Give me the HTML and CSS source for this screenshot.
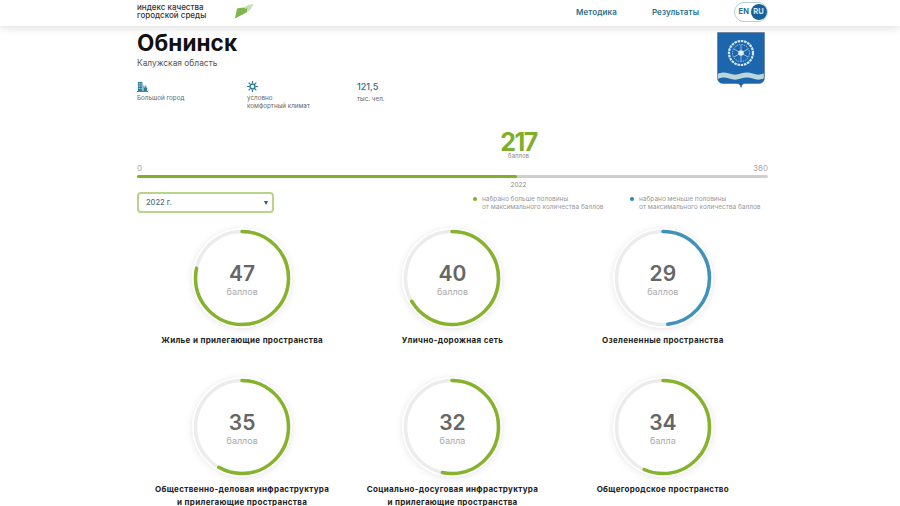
FILE: index.html
```html
<!DOCTYPE html>
<html lang="ru">
<head>
<meta charset="utf-8">
<title>Обнинск</title>
<link rel="stylesheet" href="styles.css">
</head>
<body>
<header class="topbar">
  <div class="brand">
    <div class="brand-text">индекс качества<br>городской среды</div>
    <svg class="leaf" viewBox="0 0 19 15"><path fill="#7fb54a" d="M0 14.500 2 4.500 8 3.500 11 4.500 13 3 12 8 9.500 9.500Z"/><path fill="#c9dfb6" d="M8 3.500 13 1 18.500 0 15 6 12 8 13 3 11 4.500Z"/></svg>
  </div>
  <nav class="nav">
    <a>Методика</a>
    <a>Результаты</a>
    <div class="lang"><span class="lang-en">EN</span><span class="lang-ru">RU</span></div>
  </nav>
</header>

<main class="page">
  <section class="head">
    <div>
      <h1 class="city">Обнинск</h1>
      <div class="region">Калужская область</div>
      <div class="stats">
        <div class="stat">
          <svg class="stat-icon" viewBox="0 0 12 12"><path fill="#2f7f9c" d="M1 1h5v10H1zM7 5h1v2h1V5h1v2h1v4H7z"/><path fill="#fff" d="M2 2.500h1v1H2zM4 2.500h1v1H4zM2 5h1v1H2zM4 5h1v1H4zM2 7.500h1v1H2zM4 7.500h1v1H4z"/><path fill="#2f7f9c" d="M0 11h12v1H0z"/></svg>
          <div class="stat-label">Большой город</div>
        </div>
        <div class="stat">
          <svg class="stat-icon" viewBox="0 0 12 12"><g stroke="#2f7f9c" fill="none"><circle cx="6" cy="6" r="2.700" stroke-width="1.700"/><path stroke-width="1.300" d="M6 0v2.500M6 9.500V12M0 6h2.500M9.500 6H12M1.800 1.800l1.800 1.800M8.400 8.400l1.800 1.800M1.800 10.200l1.800-1.800M8.400 3.600l1.800-1.800"/></g></svg>
          <div class="stat-label">условно<br>комфортный климат</div>
        </div>
        <div class="stat">
          <div class="stat-value">121,5</div>
          <div class="stat-label">тыс. чел.</div>
        </div>
      </div>
    </div>
    <svg class="arms" viewBox="0 0 48 57">
      <path fill="#1c66ad" stroke="#5c6f80" stroke-width=".6" d="M.5.500h47v45c0 4-2.500 6-6 6H28c-2 0-3 1-4 4-1-3-2-4-4-4H6.500c-3.500 0-6-2-6-6z"/>
      <g fill="none" stroke="#d7e8ee">
        <circle cx="24" cy="21" r="12" stroke-width="2.200" stroke-dasharray="2.500 .8"/>
        <circle cx="24" cy="21" r="8.500" stroke-width=".7" stroke-dasharray="1.500 1"/>
        <path stroke-width=".9" stroke="#9fc4dd" d="M24 13v16M17 17l14 8M17 25l14-8"/>
      </g>
      <circle cx="24" cy="21" r="2.800" fill="#dfeef2"/>
      <path fill="#b9d6da" d="M.8 42c4-2 7-2 11.500-.5s7 1.500 11.500 0 8-1.500 12 0 7 1.500 11 0v5c-4 1.500-7 1.500-11 0s-8-1.500-12 0-7 1.500-11.500 0-7.500-1.500-11.500.5z"/>
    </svg>
  </section>

  <section class="score">
    <div class="score-value">217</div>
    <div class="score-unit">баллов</div>
  </section>
  <div class="scale"><span>0</span><span>360</span></div>
  <div class="bar"><div class="bar-fill" style="width:60.3%"></div></div>
  <div class="score score-year">2022</div>

  <section class="filters">
    <div class="select"><span>2022 г.</span><i class="caret"></i></div>
    <div class="legends">
      <div class="legend"><i class="dot dot-green"></i><span>набрано больше половины<br>от максимального количества баллов</span></div>
      <div class="legend"><i class="dot dot-blue"></i><span>набрано меньше половины<br>от максимального количества баллов</span></div>
    </div>
  </section>

  <section class="cards">
    <article class="card">
      <div class="ring">
        <svg viewBox="0 0 100 100"><circle class="track" cx="50" cy="50" r="46.500"/><circle class="arc arc-green" cx="50" cy="50" r="46.500" pathLength="60" stroke-dasharray="47 60"/></svg>
        <div class="ring-text"><b>47</b><span>баллов</span></div>
      </div>
      <h3>Жилье и прилегающие пространства</h3>
    </article>
    <article class="card">
      <div class="ring">
        <svg viewBox="0 0 100 100"><circle class="track" cx="50" cy="50" r="46.500"/><circle class="arc arc-green" cx="50" cy="50" r="46.500" pathLength="60" stroke-dasharray="40 60"/></svg>
        <div class="ring-text"><b>40</b><span>баллов</span></div>
      </div>
      <h3>Улично-дорожная сеть</h3>
    </article>
    <article class="card">
      <div class="ring">
        <svg viewBox="0 0 100 100"><circle class="track" cx="50" cy="50" r="46.500"/><circle class="arc arc-blue" cx="50" cy="50" r="46.500" pathLength="60" stroke-dasharray="29 60"/></svg>
        <div class="ring-text"><b>29</b><span>баллов</span></div>
      </div>
      <h3>Озелененные пространства</h3>
    </article>
    <article class="card">
      <div class="ring">
        <svg viewBox="0 0 100 100"><circle class="track" cx="50" cy="50" r="46.500"/><circle class="arc arc-green" cx="50" cy="50" r="46.500" pathLength="60" stroke-dasharray="35 60"/></svg>
        <div class="ring-text"><b>35</b><span>баллов</span></div>
      </div>
      <h3>Общественно-деловая инфраструктура<br>и прилегающие пространства</h3>
    </article>
    <article class="card">
      <div class="ring">
        <svg viewBox="0 0 100 100"><circle class="track" cx="50" cy="50" r="46.500"/><circle class="arc arc-green" cx="50" cy="50" r="46.500" pathLength="60" stroke-dasharray="32 60"/></svg>
        <div class="ring-text"><b>32</b><span>балла</span></div>
      </div>
      <h3>Социально-досуговая инфраструктура<br>и прилегающие пространства</h3>
    </article>
    <article class="card">
      <div class="ring">
        <svg viewBox="0 0 100 100"><circle class="track" cx="50" cy="50" r="46.500"/><circle class="arc arc-green" cx="50" cy="50" r="46.500" pathLength="60" stroke-dasharray="34 60"/></svg>
        <div class="ring-text"><b>34</b><span>балла</span></div>
      </div>
      <h3>Общегородское пространство</h3>
    </article>
  </section>
</main>
</body>
</html>
```

FILE: styles.css
```css
* { box-sizing: border-box; }
html, body { margin: 0; height: 506px; overflow: hidden; background: #fff; }
body { font-family: Inter, "Liberation Sans", sans-serif; color: #222; }

.topbar {
  height: 26px;
  padding: 0 132px 0 137px;
  display: flex;
  justify-content: space-between;
  align-items: center;
  background: #fff;
  box-shadow: 0 2px 8px rgba(0, 0, 0, .13);
}
.brand { display: flex; align-items: flex-start; margin-top: -4px; }
.brand-text { width: 98px; font-size: 8px; line-height: 8.500px; font-weight: 500; color: #333; }
.leaf { width: 19px; height: 15px; margin-top: 1px; }
.nav { display: flex; align-items: center; font-size: 8px; font-weight: 600; color: #2c6f8c; margin-top: -3px; letter-spacing: .1px; }
.nav a { margin-right: 35px; }
.lang {
  width: 34px; height: 20px;
  display: flex; align-items: center; justify-content: space-between;
  padding: 0 .5px 0 3.500px;
  border: 1.500px solid #b8cdd6;
  border-radius: 10px;
  font-size: 7.500px; font-weight: 700;
}
.lang-ru {
  width: 16px; height: 16px; border-radius: 50%;
  display: flex; align-items: center; justify-content: center;
  background: #1a6098; color: #dbe9f2;
}

.page { width: 631px; margin-left: 137px; padding-top: 6px; }
.head { display: flex; justify-content: space-between; align-items: flex-start; height: 100px; }
.city { margin: 0; font-size: 22.500px; line-height: 22px; font-weight: 700; color: #111; letter-spacing: .1px; }
.region { margin-top: 3px; font-size: 8.400px; line-height: 12px; color: #555; }
.stats { display: flex; margin-top: 12px; }
.stat { width: 110px; }
.stat-icon { display: block; width: 11px; height: 11px; margin-bottom: 3px; }
.stat-value { font-size: 9px; line-height: 11px; font-weight: 500; color: #2c6f8c; margin-bottom: 4px; }
.stat-label { font-size: 6.300px; line-height: 7.500px; color: #666; }
.arms { width: 48px; height: 57px; margin-right: 3px; }

.score { width: 80px; margin-left: calc(60.3% - 39px); text-align: center; }
.score-value { font-size: 25px; line-height: 21px; font-weight: 700; color: #7fb02a; letter-spacing: -1.600px; }
.score-unit { font-size: 6px; line-height: 6px; color: #888; }
.scale { display: flex; justify-content: space-between; margin-top: 5px; height: 9px; font-size: 8px; line-height: 9px; color: #aaa; }
.bar { height: 3px; margin-top: 2px; background: #cfcfcf; border-radius: 2px; }
.bar-fill { height: 100%; background: #7fb02a; border-radius: 2px; }
.score-year { margin-top: 3px; font-size: 6.500px; line-height: 8px; color: #888; }

.filters { display: flex; margin-top: 3px; }
.select {
  width: 137px; height: 21px;
  padding: 0 4px 0 7px;
  display: flex; align-items: center; justify-content: space-between;
  border: 2px solid #b9d48a;
  border-radius: 4px;
  font-size: 7.500px; font-weight: 500; color: #4a6f80;
}
.caret { width: 0; height: 0; border: 2.500px solid transparent; border-top: 4px solid #1f5f86; border-bottom: 0; }
.legends { display: grid; grid-template-columns: 157px 1fr; margin-left: 199px; padding-top: 3px; }
.legend { display: flex; font-size: 6.500px; line-height: 8px; color: #999; white-space: nowrap; }
.dot { flex: none; width: 4px; height: 4px; margin: 2px 5px 0 0; border-radius: 50%; }
.dot-green { background: #7fb02a; }
.dot-blue { background: #2f86ad; }

.cards { display: grid; grid-template-columns: repeat(3, 1fr); row-gap: 28px; margin-top: 15px; }
.card { height: 121px; display: flex; flex-direction: column; align-items: center; }
.card h3 { margin: 6px 0 0; font-size: 8px; line-height: 13px; font-weight: 700; text-align: center; color: #222; letter-spacing: .32px; white-space: nowrap; }
.ring { position: relative; width: 100px; height: 100px; flex: none; border-radius: 50%; background: #fff; box-shadow: 0 1px 7px rgba(0, 0, 0, .1); }
.ring svg { display: block; width: 100%; height: 100%; }
.track { fill: none; stroke: #ececec; stroke-width: 3.500; }
.arc { fill: none; stroke-width: 3.500; stroke-linecap: round; transform: rotate(-90deg); transform-origin: 50% 50%; }
.arc-green { stroke: #85b32b; }
.arc-blue { stroke: #3f93ba; }
.ring-text { position: absolute; inset: 0; padding-top: 3px; display: flex; flex-direction: column; align-items: center; justify-content: center; }
.ring-text b { font-size: 21px; line-height: 24px; font-weight: 600; color: #666; }
.ring-text span { font-size: 9px; line-height: 12px; color: #aaa; }
```
